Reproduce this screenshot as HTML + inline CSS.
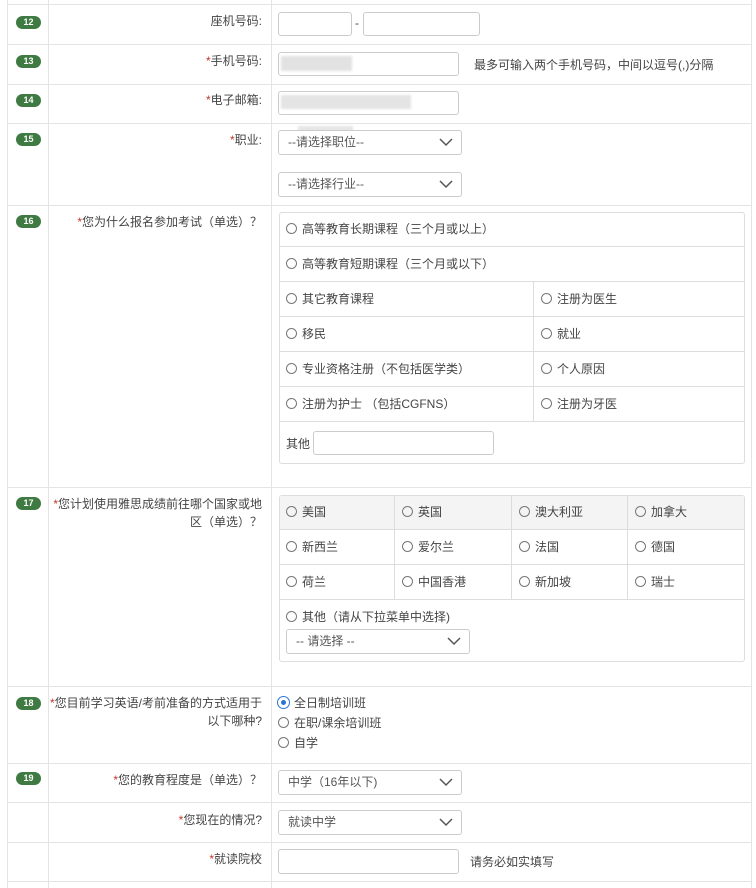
<!DOCTYPE html>
<html><head><meta charset="utf-8"><style>
*{box-sizing:border-box;margin:0;padding:0}
body{width:756px;height:888px;background:#fff;position:relative;overflow:hidden;font-family:"Liberation Sans","Noto Sans CJK SC",sans-serif;font-size:12px;color:#444}
.a{position:absolute}
.hl{position:absolute;height:1px;background:#e4e4e4;left:7px;width:745px}
.vl{position:absolute;width:1px;background:#e4e4e4;top:0;height:888px}
.badge{position:absolute;left:16px;width:25px;height:13px;border-radius:7px;background:#3f7a42;color:#fff;font-size:9px;font-weight:bold;text-align:center;line-height:13px}
.lab{position:absolute;right:494px;text-align:right;line-height:18px;color:#444}
.lab b{color:#c0392b;font-weight:normal}
.in{position:absolute;border:1px solid #ccc;border-radius:3px;background:#fff}
.sel{position:absolute;border:1px solid #ccc;border-radius:3px;background:#fff;padding-left:9px;line-height:23px;color:#555}
.sel svg{position:absolute;right:8px;top:7px}
.r{display:inline-block;width:11px;height:11px;border:1px solid #777;border-radius:50%;vertical-align:-1px;margin-right:5px}
.box{position:absolute;border:1px solid #ddd;border-radius:3px}
.cell{position:absolute;border-bottom:1px solid #ddd;padding-left:7px;line-height:34px;color:#444}
</style></head><body>
<div class="vl" style="left:7px"></div>
<div class="vl" style="left:48px"></div>
<div class="vl" style="left:271px"></div>
<div class="vl" style="left:751px"></div>
<div class="hl" style="top:4px"></div>
<div class="hl" style="top:44px"></div>
<div class="hl" style="top:84px"></div>
<div class="hl" style="top:123px"></div>
<div class="hl" style="top:205px"></div>
<div class="hl" style="top:487px"></div>
<div class="hl" style="top:686px"></div>
<div class="hl" style="top:763px"></div>
<div class="hl" style="top:802px"></div>
<div class="hl" style="top:842px"></div>
<div class="hl" style="top:881px"></div>

<div class="badge" style="top:16px">12</div>
<div class="badge" style="top:55px">13</div>
<div class="badge" style="top:94px">14</div>
<div class="badge" style="top:133px">15</div>
<div class="badge" style="top:215px">16</div>
<div class="badge" style="top:497px">17</div>
<div class="badge" style="top:697px">18</div>
<div class="badge" style="top:772px">19</div>

<div class="lab" style="top:12px">座机号码:</div>
<div class="lab" style="top:52px"><b>*</b>手机号码:</div>
<div class="lab" style="top:91px"><b>*</b>电子邮箱:</div>
<div class="lab" style="top:131px"><b>*</b>职业:</div>
<div class="lab" style="top:213px"><b>*</b>您为什么报名参加考试（单选）？</div>
<div class="lab" style="top:495px;width:215px"><b>*</b>您计划使用雅思成绩前往哪个国家或地区（单选）？</div>
<div class="lab" style="top:694px;width:215px"><b>*</b>您目前学习英语/考前准备的方式适用于以下哪种?</div>
<div class="lab" style="top:771px"><b>*</b>您的教育程度是（单选）？</div>
<div class="lab" style="top:811px"><b>*</b>您现在的情况?</div>
<div class="lab" style="top:850px"><b>*</b>就读院校</div>

<div class="in" style="left:278px;top:12px;width:74px;height:24px"></div>
<div class="a" style="left:355px;top:16px">-</div>
<div class="in" style="left:363px;top:12px;width:117px;height:24px"></div>
<div class="in" style="left:278px;top:52px;width:181px;height:24px"></div>
<div class="a" style="left:281px;top:56px;width:71px;height:15px;background:#e2e2e2;filter:blur(1px)"></div>
<div class="a" style="left:474px;top:56px;color:#444">最多可输入两个手机号码，中间以逗号(,)分隔</div>
<div class="in" style="left:278px;top:91px;width:181px;height:24px"></div>
<div class="a" style="left:281px;top:95px;width:130px;height:14px;background:#e4e4e4;filter:blur(1px)"></div>
<div class="a" style="left:298px;top:126px;width:55px;height:6px;background:#e6e6e6;filter:blur(1px)"></div>
<div class="sel" style="left:278px;top:130px;width:184px;height:25px">--请选择职位--<svg width="14" height="9"><path d="M1 1l6 6 6-6" fill="none" stroke="#555" stroke-width="1.5"/></svg></div>
<div class="sel" style="left:278px;top:172px;width:184px;height:25px">--请选择行业--<svg width="14" height="9"><path d="M1 1l6 6 6-6" fill="none" stroke="#555" stroke-width="1.5"/></svg></div>

<div class="box" style="left:279px;top:212px;width:466px;height:252px"></div>
<div class="cell" style="left:279px;top:212px;width:466px;height:35px"><span class="r"></span>高等教育长期课程（三个月或以上）</div>
<div class="cell" style="left:279px;top:247px;width:466px;height:35px"><span class="r"></span>高等教育短期课程（三个月或以下）</div>
<div class="cell" style="left:279px;top:282px;width:255px;height:35px;border-right:1px solid #ddd"><span class="r"></span>其它教育课程</div>
<div class="cell" style="left:534px;top:282px;width:211px;height:35px"><span class="r"></span>注册为医生</div>
<div class="cell" style="left:279px;top:317px;width:255px;height:35px;border-right:1px solid #ddd"><span class="r"></span>移民</div>
<div class="cell" style="left:534px;top:317px;width:211px;height:35px"><span class="r"></span>就业</div>
<div class="cell" style="left:279px;top:352px;width:255px;height:35px;border-right:1px solid #ddd"><span class="r"></span>专业资格注册（不包括医学类）</div>
<div class="cell" style="left:534px;top:352px;width:211px;height:35px"><span class="r"></span>个人原因</div>
<div class="cell" style="left:279px;top:387px;width:255px;height:35px;border-right:1px solid #ddd"><span class="r"></span>注册为护士 （包括CGFNS）</div>
<div class="cell" style="left:534px;top:387px;width:211px;height:35px"><span class="r"></span>注册为牙医</div>
<div class="a" style="left:286px;top:435px">其他</div>
<div class="in" style="left:313px;top:431px;width:181px;height:24px"></div>

<div class="box" style="left:279px;top:495px;width:466px;height:167px"></div>
<div class="a" style="left:280px;top:496px;width:464px;height:34px;background:#f4f4f4"></div>
<div class="cell" style="left:279px;top:495px;width:116px;height:35px;border-right:1px solid #ddd"><span class="r"></span>美国</div>
<div class="cell" style="left:395px;top:495px;width:117px;height:35px;border-right:1px solid #ddd"><span class="r"></span>英国</div>
<div class="cell" style="left:512px;top:495px;width:116px;height:35px;border-right:1px solid #ddd"><span class="r"></span>澳大利亚</div>
<div class="cell" style="left:628px;top:495px;width:117px;height:35px"><span class="r"></span>加拿大</div>
<div class="cell" style="left:279px;top:530px;width:116px;height:35px;border-right:1px solid #ddd"><span class="r"></span>新西兰</div>
<div class="cell" style="left:395px;top:530px;width:117px;height:35px;border-right:1px solid #ddd"><span class="r"></span>爱尔兰</div>
<div class="cell" style="left:512px;top:530px;width:116px;height:35px;border-right:1px solid #ddd"><span class="r"></span>法国</div>
<div class="cell" style="left:628px;top:530px;width:117px;height:35px"><span class="r"></span>德国</div>
<div class="cell" style="left:279px;top:565px;width:116px;height:35px;border-right:1px solid #ddd"><span class="r"></span>荷兰</div>
<div class="cell" style="left:395px;top:565px;width:117px;height:35px;border-right:1px solid #ddd"><span class="r"></span>中国香港</div>
<div class="cell" style="left:512px;top:565px;width:116px;height:35px;border-right:1px solid #ddd"><span class="r"></span>新加坡</div>
<div class="cell" style="left:628px;top:565px;width:117px;height:35px"><span class="r"></span>瑞士</div>
<div class="a" style="left:286px;top:608px;line-height:18px"><span class="r"></span>其他（请从下拉菜单中选择)</div>
<div class="sel" style="left:286px;top:629px;width:184px;height:25px">-- 请选择 --<svg width="14" height="9"><path d="M1 1l6 6 6-6" fill="none" stroke="#555" stroke-width="1.5"/></svg></div>

<div class="a" style="left:278px;top:693px;line-height:20px">
<div><span class="r" style="border:3px solid #fff;background:#2a74d6;box-shadow:0 0 0 1px #2a74d6"></span>全日制培训班</div>
<div><span class="r"></span>在职/课余培训班</div>
<div><span class="r"></span>自学</div>
</div>

<div class="sel" style="left:278px;top:770px;width:184px;height:25px">中学（16年以下)<svg width="14" height="9"><path d="M1 1l6 6 6-6" fill="none" stroke="#555" stroke-width="1.5"/></svg></div>
<div class="sel" style="left:278px;top:810px;width:184px;height:25px">就读中学<svg width="14" height="9"><path d="M1 1l6 6 6-6" fill="none" stroke="#555" stroke-width="1.5"/></svg></div>
<div class="in" style="left:278px;top:849px;width:181px;height:25px"></div>
<div class="a" style="left:470px;top:853px">请务必如实填写</div>
</body></html>
